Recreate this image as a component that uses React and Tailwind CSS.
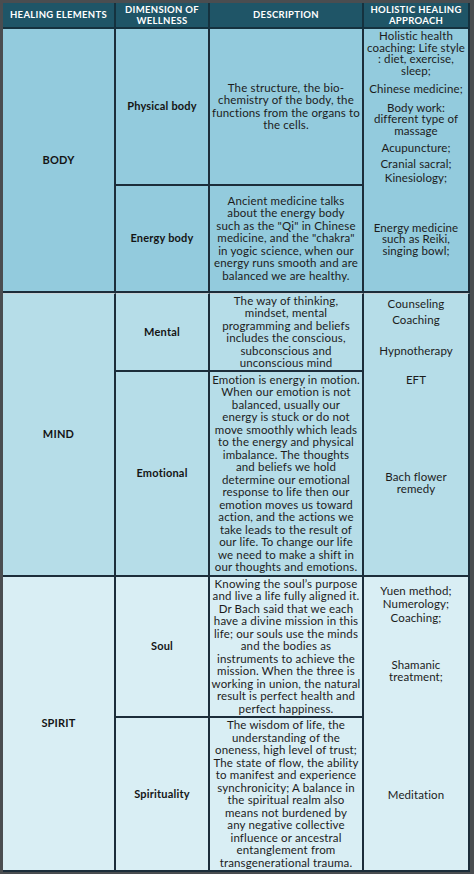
const font = { fontFamily: "Lato, 'Open Sans', sans-serif" };

const Lines = ({ lines }) =>
  lines.map((l, i) => (
    <div key={i} className="whitespace-nowrap">
      {l}
    </div>
  ));

const Desc = ({ lines, cls }) => (
  <div
    className={`flex flex-col items-center justify-center text-center text-[11.5px] tracking-[0.15px] leading-[12.5px] text-[#1c1c1c] border-r-2 border-b-2 border-[#1c2d3a] ${cls}`}
  >
    <Lines lines={lines} />
  </div>
);

const Label = ({ text, cls }) => (
  <div
    className={`flex items-center justify-center text-center text-[11px] tracking-[0.2px] font-bold text-[#141414] border-r-2 border-b-2 border-[#1c2d3a] ${cls}`}
  >
    {text}
  </div>
);

const App = () => {
  return (
    <div
      className="w-[474px] h-[874px] bg-[#4a4d50] pt-[3px] pl-[3px] pr-[4px] pb-[2px]"
      style={font}
    >
      <div className="grid grid-cols-[113px_94px_154px_106px] grid-rows-[26px_157px_107px_79px_205px_141px_154px]">
        {/* Header */}
        <div className="col-start-1 row-start-1 flex items-center justify-center bg-[#1f5567] text-white text-[9.5px] tracking-[0.3px] font-bold border-r-2 border-b-2 border-[#15323f]">
          HEALING ELEMENTS
        </div>
        <div className="col-start-2 row-start-1 flex flex-col items-center justify-center bg-[#1f5567] text-white text-[9.5px] tracking-[0.3px] font-bold leading-[11.5px] border-r-2 border-b-2 border-[#15323f]">
          <div>DIMENSION OF</div>
          <div>WELLNESS</div>
        </div>
        <div className="col-start-3 row-start-1 flex items-center justify-center bg-[#1f5567] text-white text-[9.5px] tracking-[0.3px] font-bold border-r-2 border-b-2 border-[#15323f]">
          DESCRIPTION
        </div>
        <div className="col-start-4 row-start-1 flex flex-col items-center justify-center bg-[#1f5567] text-white text-[9.5px] tracking-[0.3px] font-bold leading-[11.5px] border-r-2 border-b-2 border-[#15323f]">
          <div>HOLISTIC HEALING</div>
          <div>APPROACH</div>
        </div>

        {/* BODY */}
        <Label text="BODY" cls="col-start-1 row-start-2 row-span-2 bg-[#93cbdd]" />
        <Label text="Physical body" cls="col-start-2 row-start-2 bg-[#93cbdd]" />
        <Desc
          cls="col-start-3 row-start-2 bg-[#93cbdd]"
          lines={[
            "The structure, the bio-",
            "chemistry of the body, the",
            "functions from the organs to",
            "the cells.",
          ]}
        />
        <div className="col-start-4 row-start-2 row-span-2 flex flex-col items-center text-center text-[11.5px] tracking-[0.1px] leading-[11.5px] text-[#1c1c1c] bg-[#93cbdd] border-r-2 border-b-2 border-[#1c2d3a] pt-[1px]">
          <Lines lines={["Holistic health", "coaching: Life style", ": diet, exercise,", "sleep;"]} />
          <div className="mt-[7px]">Chinese medicine;</div>
          <div className="mt-[7px]">
            <Lines lines={["Body work:", "different type of", "massage"]} />
          </div>
          <div className="mt-[6px]">Acupuncture;</div>
          <div className="mt-[4px]">Cranial sacral;</div>
          <div className="mt-[3px]">Kinesiology;</div>
          <div className="mt-[38px]">
            <Lines lines={["Energy medicine", "such as Reiki,", "singing bowl;"]} />
          </div>
        </div>
        <Label text="Energy body" cls="col-start-2 row-start-3 bg-[#93cbdd]" />
        <Desc
          cls="col-start-3 row-start-3 bg-[#93cbdd]"
          lines={[
            "Ancient medicine talks",
            "about the energy body",
            'such as the "Qi" in Chinese',
            'medicine, and the "chakra"',
            "in yogic science, when our",
            "energy runs smooth and are",
            "balanced we are healthy.",
          ]}
        />

        {/* MIND */}
        <Label text="MIND" cls="col-start-1 row-start-4 row-span-2 bg-[#b6dde8] border-t border-t-[#c9d3d7]" />
        <Label text="Mental" cls="col-start-2 row-start-4 bg-[#b6dde8] border-t border-t-[#c9d3d7]" />
        <Desc
          cls="col-start-3 row-start-4 bg-[#b6dde8] border-t border-t-[#c9d3d7]"
          lines={[
            "The way of thinking,",
            "mindset, mental",
            "programming and beliefs",
            "includes the conscious,",
            "subconscious and",
            "unconscious mind",
          ]}
        />
        <div className="col-start-4 row-start-4 row-span-2 flex flex-col items-center text-center text-[11.5px] tracking-[0.1px] leading-[12px] text-[#1c1c1c] bg-[#b6dde8] border-r-2 border-b-2 border-[#1c2d3a] border-t border-t-[#c9d3d7] pt-[4px]">
          <div>Counseling</div>
          <div className="mt-[4px]">Coaching</div>
          <div className="mt-[19px]">Hypnotherapy</div>
          <div className="mt-[17px]">EFT</div>
          <div className="mt-[85px]">
            <Lines lines={["Bach flower", "remedy"]} />
          </div>
        </div>
        <Label text="Emotional" cls="col-start-2 row-start-5 bg-[#b6dde8]" />
        <Desc
          cls="col-start-3 row-start-5 bg-[#b6dde8]"
          lines={[
            "Emotion is energy in motion.",
            "When our emotion is not",
            "balanced, usually our",
            "energy is stuck or do not",
            "move smoothly which leads",
            "to the energy and physical",
            "imbalance. The thoughts",
            "and beliefs we hold",
            "determine our emotional",
            "response to life then our",
            "emotion moves us toward",
            "action, and the actions we",
            "take leads to the result of",
            "our life. To change our life",
            "we need to make a shift in",
            "our thoughts and emotions.",
          ]}
        />

        {/* SPIRIT */}
        <Label text="SPIRIT" cls="col-start-1 row-start-6 row-span-2 bg-[#d9eef4]" />
        <Label text="Soul" cls="col-start-2 row-start-6 bg-[#d9eef4]" />
        <Desc
          cls="col-start-3 row-start-6 bg-[#d9eef4]"
          lines={[
            "Knowing the soul\u2019s purpose",
            "and live a life fully aligned it.",
            "Dr Bach said that we each",
            "have a divine mission in this",
            "life; our souls use the minds",
            "and the bodies as",
            "instruments to achieve the",
            "mission. When the three is",
            "working in union, the natural",
            "result is perfect health and",
            "perfect happiness.",
          ]}
        />
        <div className="col-start-4 row-start-6 row-span-2 flex flex-col items-center text-center text-[11.5px] tracking-[0.1px] leading-[12px] text-[#1c1c1c] bg-[#d9eef4] border-r-2 border-b-2 border-[#1c2d3a] pt-[8px]">
          <div>Yuen method;</div>
          <div className="mt-[1px]">Numerology;</div>
          <div className="mt-[2px]">Coaching;</div>
          <div className="mt-[35px]">
            <Lines lines={["Shamanic", "treatment;"]} />
          </div>
          <div className="mt-[106px]">Meditation</div>
        </div>
        <Label text="Spirituality" cls="col-start-2 row-start-7 bg-[#d9eef4]" />
        <Desc
          cls="col-start-3 row-start-7 bg-[#d9eef4]"
          lines={[
            "The wisdom of life, the",
            "understanding of the",
            "oneness, high level of trust;",
            "The state of flow, the ability",
            "to manifest and experience",
            "synchronicity; A balance in",
            "the spiritual realm also",
            "means not burdened by",
            "any negative collective",
            "influence or ancestral",
            "entanglement from",
            "transgenerational trauma.",
          ]}
        />
      </div>
    </div>
  );
};

export default App;
